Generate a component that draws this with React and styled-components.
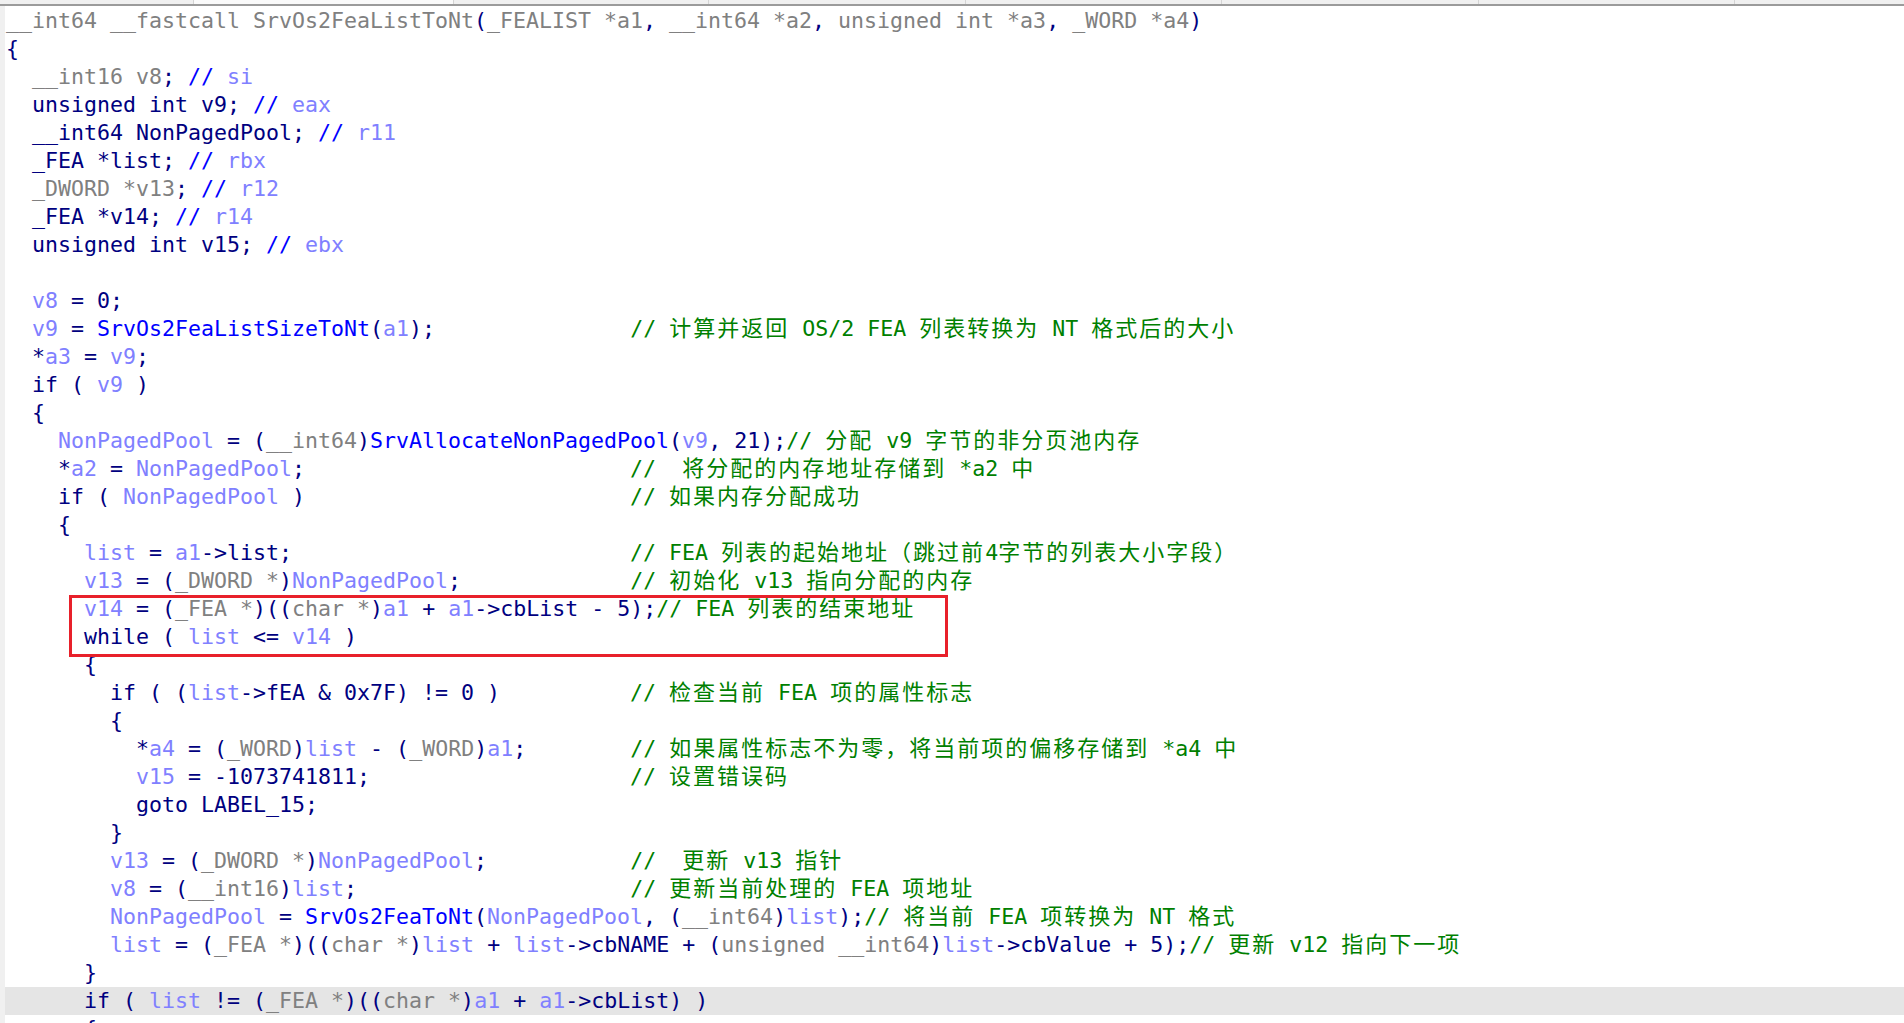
import React from "react";
import styled, { createGlobalStyle } from "styled-components";

const GlobalStyle = createGlobalStyle`
  html, body {
    margin: 0;
    padding: 0;
    background: #ffffff;
  }
  body {
    overflow: hidden;
  }
`;

const colors = {
  n: "#000080", // plain text, keywords, numbers
  g: "#808080", // types / casts
  v: "#8080ff", // local variables
  f: "#0000ff", // function names
  c: "#008000", // comments
};

const COMMENT_COL = 48;

const Page = styled.div`
  position: relative;
  display: flex;
  flex-direction: column;
  width: 100%;
  height: 100vh;
  overflow: hidden;
  background: #ffffff;
`;

const HeaderStrip = styled.div`
  display: flex;
  flex-shrink: 0;
  height: 4px;
  background: #f0f0f0;
  border-bottom: 2px solid #9b9b9b;
`;

const HeaderCell = styled.div`
  flex-shrink: 0;
  width: ${(p) => p.$w}px;
  border-right: 1px solid #d4d4d4;
  background: ${(p) => (p.$active ? "#fafafa" : "transparent")};
`;

const Body = styled.div`
  flex: 1;
  display: flex;
  min-height: 0;
`;

const Gutter = styled.div`
  flex-shrink: 0;
  width: 5px;
  background: #f0f0f0;
`;

const Pane = styled.div`
  flex: 1;
  padding-top: 1px;
  font-family: "DejaVu Sans Mono", "Noto Sans CJK SC", monospace;
  font-size: 21.6px;
  color: ${colors.n};
`;

const Line = styled.div`
  height: 28px;
  line-height: 28px;
  padding-left: 1px;
  white-space: pre;
  background: ${(p) => (p.$hl ? "#e5e5e5" : "transparent")};
`;

const Tok = styled.span`
  color: ${(p) => colors[p.$t]};
`;

const Cjk = styled.span`
  font-family: "Noto Sans CJK SC", sans-serif;
  font-size: 22px;
  line-height: 1;
  letter-spacing: 2px;
`;

const Mark = styled.div`
  position: absolute;
  left: 69px;
  top: 595px;
  width: 879px;
  height: 62px;
  box-sizing: border-box;
  border: 3px solid #e8202a;
  pointer-events: none;
`;

// each line: [indent, tokens, comment?, highlighted?]
const code = [
  [0, [["g", "__int64 __fastcall SrvOs2FeaListToNt"], ["n", "("], ["g", "_FEALIST *a1"], ["n", ", "], ["g", "__int64 *a2"], ["n", ", "], ["g", "unsigned int *a3"], ["n", ", "], ["g", "_WORD *a4"], ["n", ")"]]],
  [0, [["n", "{"]]],
  [2, [["g", "__int16 v8"], ["n", "; "], ["f", "// "], ["v", "si"]]],
  [2, [["n", "unsigned int v9; "], ["f", "// "], ["v", "eax"]]],
  [2, [["n", "__int64 NonPagedPool; "], ["f", "// "], ["v", "r11"]]],
  [2, [["n", "_FEA *list; "], ["f", "// "], ["v", "rbx"]]],
  [2, [["g", "_DWORD *v13"], ["n", "; "], ["f", "// "], ["v", "r12"]]],
  [2, [["n", "_FEA *v14; "], ["f", "// "], ["v", "r14"]]],
  [2, [["n", "unsigned int v15; "], ["f", "// "], ["v", "ebx"]]],
  [0, []],
  [2, [["v", "v8"], ["n", " = 0;"]]],
  [2, [["v", "v9"], ["n", " = "], ["f", "SrvOs2FeaListSizeToNt"], ["n", "("], ["v", "a1"], ["n", ");"]], "// 计算并返回 OS/2 FEA 列表转换为 NT 格式后的大小"],
  [2, [["n", "*"], ["v", "a3"], ["n", " = "], ["v", "v9"], ["n", ";"]]],
  [2, [["n", "if ( "], ["v", "v9"], ["n", " )"]]],
  [2, [["n", "{"]]],
  [4, [["v", "NonPagedPool"], ["n", " = ("], ["g", "__int64"], ["n", ")"], ["f", "SrvAllocateNonPagedPool"], ["n", "("], ["v", "v9"], ["n", ", 21);"]], "// 分配 v9 字节的非分页池内存"],
  [4, [["n", "*"], ["v", "a2"], ["n", " = "], ["v", "NonPagedPool"], ["n", ";"]], "//  将分配的内存地址存储到 *a2 中"],
  [4, [["n", "if ( "], ["v", "NonPagedPool"], ["n", " )"]], "// 如果内存分配成功"],
  [4, [["n", "{"]]],
  [6, [["v", "list"], ["n", " = "], ["v", "a1"], ["n", "->list;"]], "// FEA 列表的起始地址（跳过前4字节的列表大小字段）"],
  [6, [["v", "v13"], ["n", " = ("], ["g", "_DWORD *"], ["n", ")"], ["v", "NonPagedPool"], ["n", ";"]], "// 初始化 v13 指向分配的内存"],
  [6, [["v", "v14"], ["n", " = ("], ["g", "_FEA *"], ["n", ")(("], ["g", "char *"], ["n", ")"], ["v", "a1"], ["n", " + "], ["v", "a1"], ["n", "->cbList - 5);"]], "// FEA 列表的结束地址"],
  [6, [["n", "while ( "], ["v", "list"], ["n", " <= "], ["v", "v14"], ["n", " )"]]],
  [6, [["n", "{"]]],
  [8, [["n", "if ( ("], ["v", "list"], ["n", "->fEA & 0x7F) != 0 )"]], "// 检查当前 FEA 项的属性标志"],
  [8, [["n", "{"]]],
  [10, [["n", "*"], ["v", "a4"], ["n", " = ("], ["g", "_WORD"], ["n", ")"], ["v", "list"], ["n", " - ("], ["g", "_WORD"], ["n", ")"], ["v", "a1"], ["n", ";"]], "// 如果属性标志不为零，将当前项的偏移存储到 *a4 中"],
  [10, [["v", "v15"], ["n", " = -1073741811;"]], "// 设置错误码"],
  [10, [["n", "goto LABEL_15;"]]],
  [8, [["n", "}"]]],
  [8, [["v", "v13"], ["n", " = ("], ["g", "_DWORD *"], ["n", ")"], ["v", "NonPagedPool"], ["n", ";"]], "//  更新 v13 指针"],
  [8, [["v", "v8"], ["n", " = ("], ["g", "__int16"], ["n", ")"], ["v", "list"], ["n", ";"]], "// 更新当前处理的 FEA 项地址"],
  [8, [["v", "NonPagedPool"], ["n", " = "], ["f", "SrvOs2FeaToNt"], ["n", "("], ["v", "NonPagedPool"], ["n", ", ("], ["g", "__int64"], ["n", ")"], ["v", "list"], ["n", ");"]], "// 将当前 FEA 项转换为 NT 格式"],
  [8, [["v", "list"], ["n", " = ("], ["g", "_FEA *"], ["n", ")(("], ["g", "char *"], ["n", ")"], ["v", "list"], ["n", " + "], ["v", "list"], ["n", "->cbNAME + ("], ["g", "unsigned __int64"], ["n", ")"], ["v", "list"], ["n", "->cbValue + 5);"]], "// 更新 v12 指向下一项"],
  [6, [["n", "}"]]],
  [6, [["n", "if ( "], ["v", "list"], ["n", " != ("], ["g", "_FEA *"], ["n", ")(("], ["g", "char *"], ["n", ")"], ["v", "a1"], ["n", " + "], ["v", "a1"], ["n", "->cbList) )"]], null, true],
  [6, [["n", "{"]]],
];

const headerCells = [193, 259, 254, 256, 255, 256, 255];

const CJK_RUN = /([\u3000-\u303f\u4e00-\u9fff\uff00-\uffef]+)/;

function Comment({ text }) {
  const parts = text.split(CJK_RUN);
  return (
    <Tok $t="c">
      {parts.map((part, i) =>
        i % 2 === 1 ? <Cjk key={i}>{part}</Cjk> : part
      )}
    </Tok>
  );
}

function CodeLine({ indent, tokens, comment, hl }) {
  const len = indent + tokens.reduce((sum, [, text]) => sum + text.length, 0);
  const pad = comment ? " ".repeat(Math.max(0, COMMENT_COL - len)) : "";
  return (
    <Line $hl={hl}>
      {" ".repeat(indent)}
      {tokens.map(([t, text], i) => (
        <Tok key={i} $t={t}>
          {text}
        </Tok>
      ))}
      {pad}
      {comment && <Comment text={comment} />}
    </Line>
  );
}

export default function App() {
  return (
    <Page>
      <GlobalStyle />
      <HeaderStrip>
        {headerCells.map((w, i) => (
          <HeaderCell key={i} $w={w} $active={i === 1} />
        ))}
      </HeaderStrip>
      <Body>
        <Gutter />
        <Pane>
          {code.map(([indent, tokens, comment, hl], i) => (
            <CodeLine key={i} indent={indent} tokens={tokens} comment={comment} hl={hl} />
          ))}
        </Pane>
      </Body>
      <Mark />
    </Page>
  );
}
